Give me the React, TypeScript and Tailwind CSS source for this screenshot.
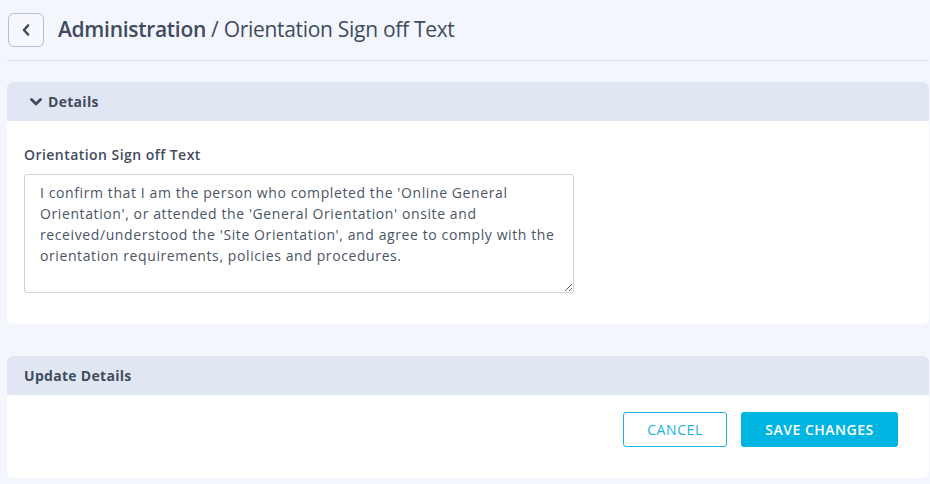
import React from "react";

const font = { fontFamily: '"Open Sans", "Liberation Sans", sans-serif' };

const signOffText =
  "I confirm that I am the person who completed the 'Online General Orientation', or attended the 'General Orientation' onsite and received/understood the 'Site Orientation', and agree to comply with the orientation requirements, policies and procedures.";

const Card = ({ title, icon, children }: { title: string; icon?: React.ReactNode; children: React.ReactNode }) => (
  <div className="rounded-md overflow-hidden bg-white">
    <div className="h-[39px] bg-[#e1e7f2] flex items-center px-[17px] gap-[5px] text-[14px] font-bold text-[#3f4b5e] tracking-[0.3px]">
      {icon}
      <span>{title}</span>
    </div>
    {children}
  </div>
);

export default function App() {
  return (
    <div className="min-h-[484px] w-[930px] bg-[#f3f6fd] pl-[7px] pr-px pb-[6px]" style={font}>
      <div className="flex items-center h-[61px] border-b border-[#dcdfe6] gap-[14px]">
        <button className="ml-px w-[36px] h-[34px] rounded-md border border-[#b6bfcc] bg-[#f6f8fd] flex items-center justify-center text-[#3f4b5e]">
          <svg width="12" height="14" viewBox="0 0 12 14" fill="none">
            <path d="M8 2.5 L4 7 L8 11.5" stroke="currentColor" strokeWidth="2.6" strokeLinecap="round" strokeLinejoin="round" />
          </svg>
        </button>
        <h1 className="text-[21px] text-[#3f4b5e] tracking-[-0.3px]">
          <span className="font-semibold">Administration</span> / Orientation Sign off Text
        </h1>
      </div>

      <div className="mt-[21px]">
        <Card
          title="Details"
          icon={
            <svg width="14" height="10" viewBox="0 0 14 10" fill="none" className="ml-[5px]">
              <path d="M2.5 2.5 L7 7 L11.5 2.5" stroke="currentColor" strokeWidth="2.8" strokeLinecap="round" strokeLinejoin="round" />
            </svg>
          }
        >
          <div className="px-[17px] pt-[23px] pb-[31px]">
            <label className="block text-[14px] font-semibold text-[#3f4b5e] mb-[9px] tracking-[0.45px]">Orientation Sign off Text</label>
            <textarea
              className="block w-[550px] h-[119px] rounded-[3px] border border-[#cfd4dc] pl-[15px] pr-[10px] py-[7px] text-[14px] leading-[21px] tracking-[0.6px] text-[#4a5566] outline-none resize"
              style={font}
              defaultValue={signOffText}
            />
          </div>
        </Card>
      </div>

      <div className="mt-[32px]">
        <Card title="Update Details">
          <div className="flex justify-end gap-[14px] px-[31px] pt-[17px] pb-[31px]">
            <button className="w-[104px] h-[35px] rounded-[3px] border border-[#19b3e0] text-[#19b3e0] text-[14px] tracking-[0.6px]">CANCEL</button>
            <button className="w-[157px] h-[35px] rounded-[3px] bg-[#00b5e2] text-white text-[14px] font-semibold tracking-[0.5px]">SAVE CHANGES</button>
          </div>
        </Card>
      </div>
    </div>
  );
}
